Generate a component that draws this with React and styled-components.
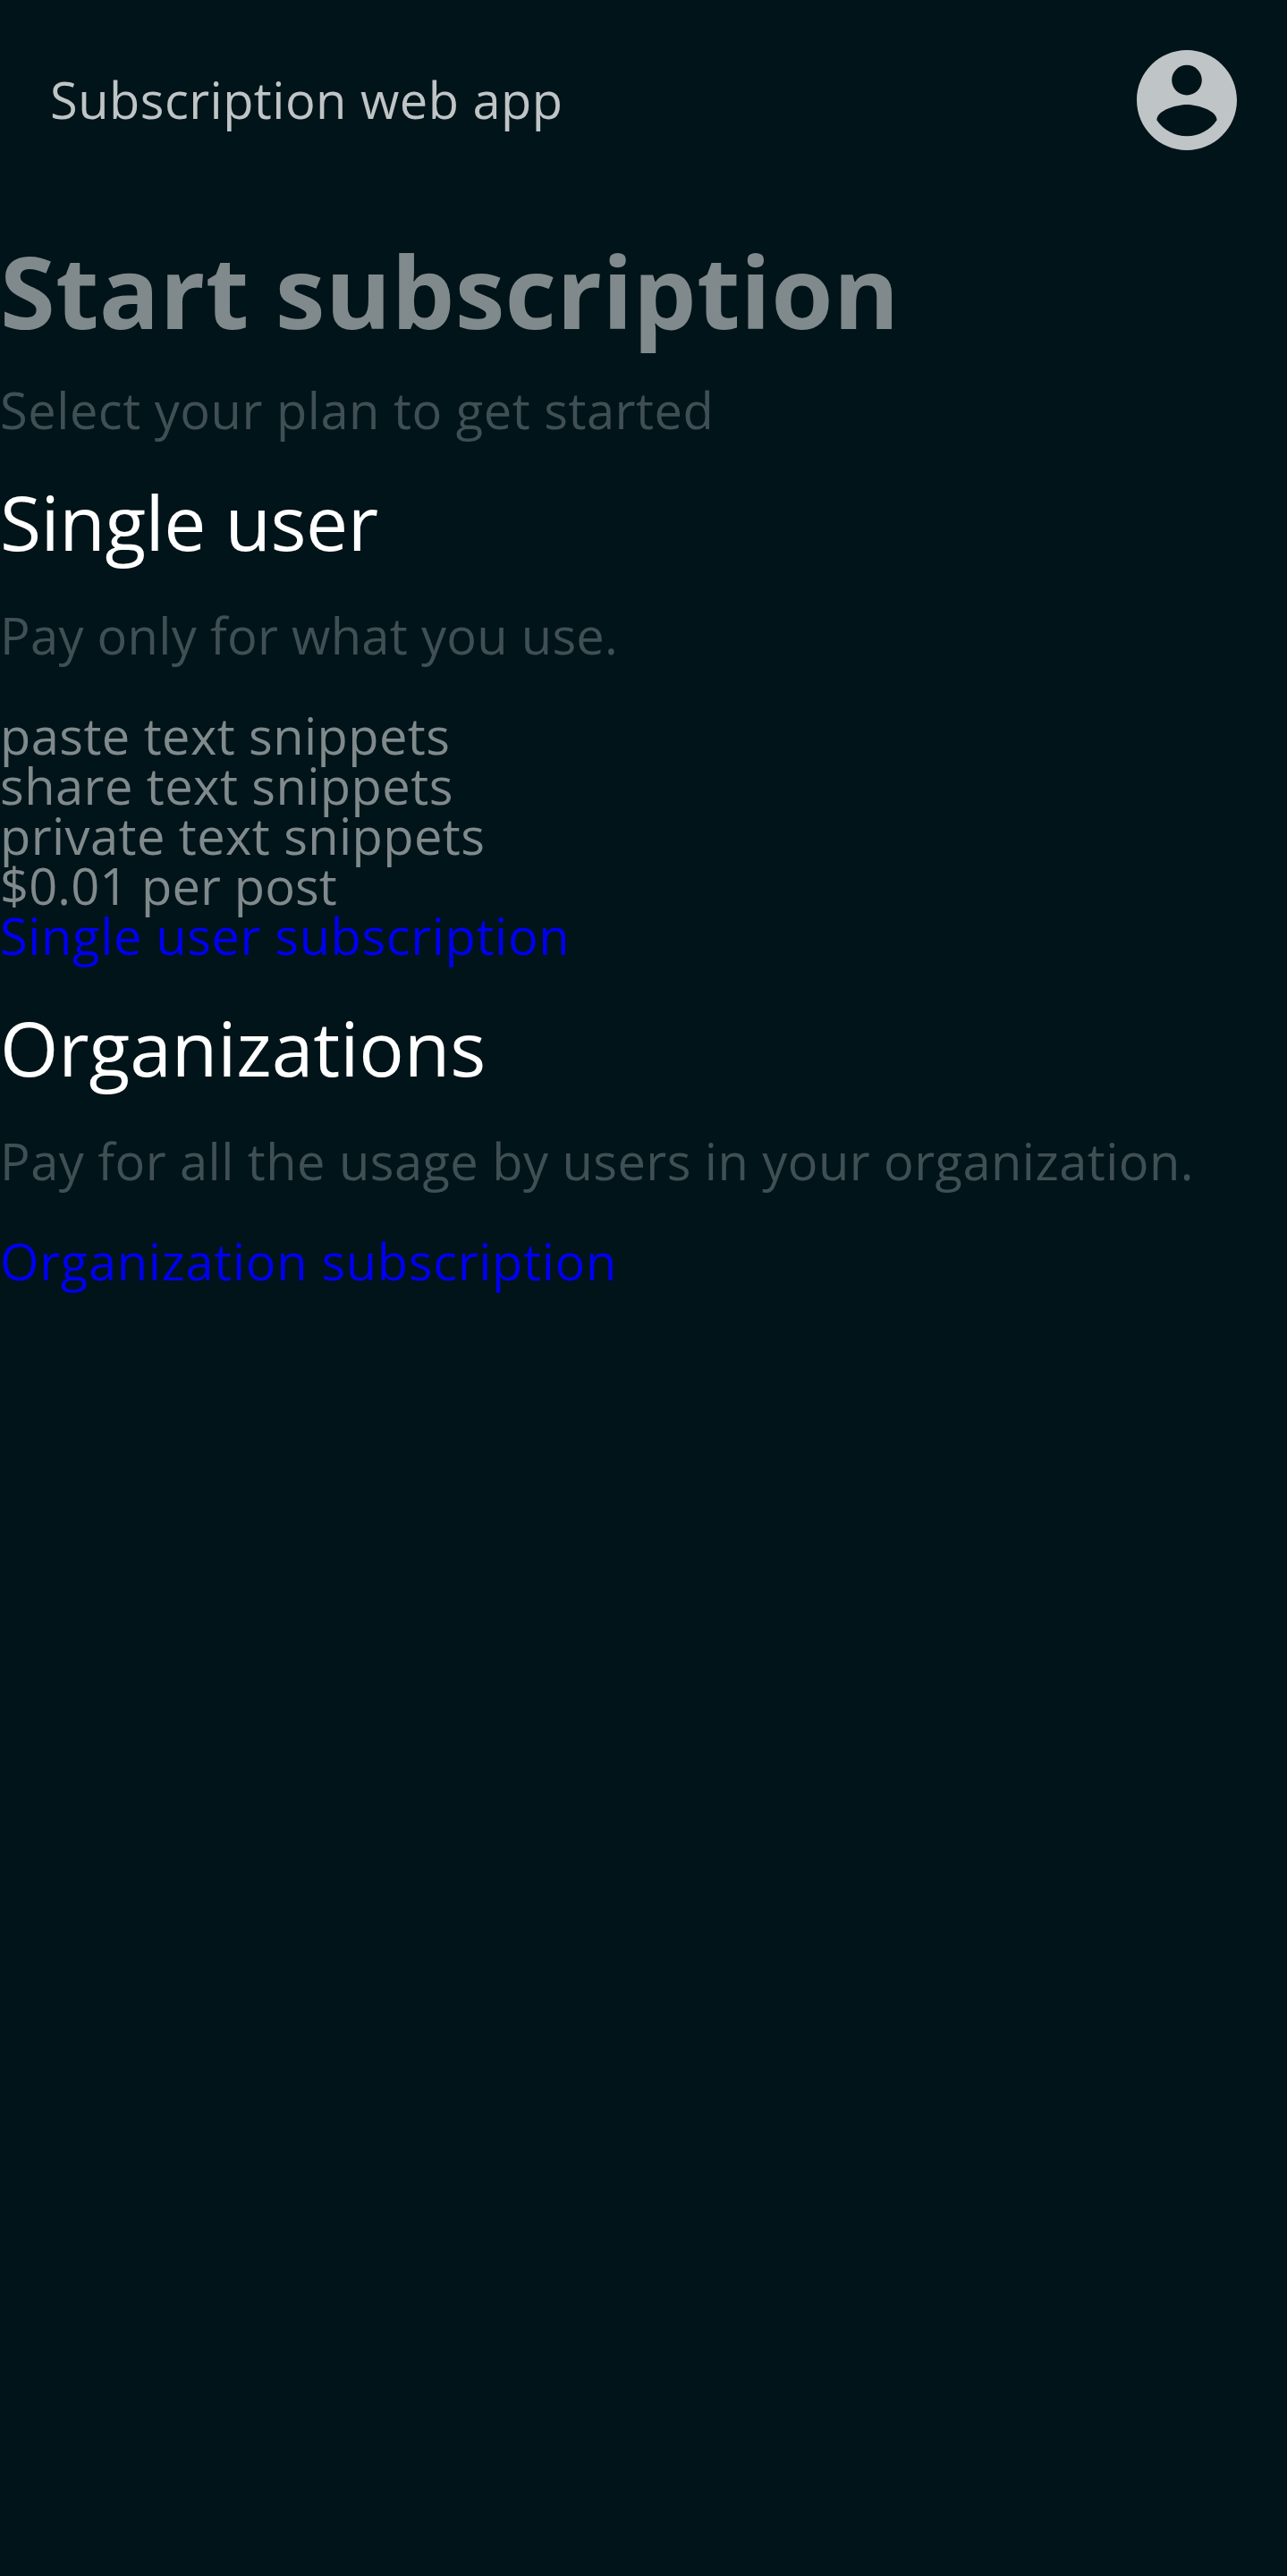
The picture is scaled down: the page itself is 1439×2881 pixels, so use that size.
import React from "react";
import styled, { createGlobalStyle } from "styled-components";

const GlobalStyle = createGlobalStyle`
  body {
    margin: 0;
    background: #001419;
    color: #808a8c;
    font-family: "Open Sans", sans-serif;
    font-size: 56px;
    line-height: 1;
  }
`;

const tracking = ({ $tracking = 0 }) => `letter-spacing: ${$tracking}px;`;

const Page = styled.div`
  min-height: 100vh;
  overflow: hidden;
`;

const Header = styled.header`
  display: flex;
  align-items: center;
  justify-content: space-between;
  padding: 56px;
  color: #bfc4c6;
`;

const Brand = styled.span`
  padding-bottom: 2px;
  ${tracking}
`;

const AccountIcon = styled.svg`
  display: block;
  width: 112px;
  height: 112px;
  fill: currentColor;
`;

const Main = styled.main`
  display: flex;
  flex-direction: column;
  padding-top: 45px;
`;

const Title = styled.h1`
  margin: 0 0 49px;
  font-size: 112px;
  font-weight: 700;
  ${tracking}
`;

const Description = styled.p`
  margin: 0;
  color: #404f53;
  white-space: nowrap;
  ${tracking}
`;

const Plan = styled.section`
  display: flex;
  flex-direction: column;
  gap: 56px;
  padding-top: 56px;
`;

const PlanName = styled.h2`
  margin: 0;
  color: #fff;
  font-size: 84px;
  font-weight: 400;
  ${tracking}
`;

const Features = styled.ul`
  margin: 0;
  padding: 0;
  list-style: none;
`;

const Feature = styled.li`
  ${tracking}
`;

const PlanLink = styled.a`
  display: block;
  color: #0000ee;
  text-decoration: none;
  ${tracking}
`;

export default function App() {
  return (
    <Page>
      <GlobalStyle />
      <Header>
        <Brand $tracking={0.47}>Subscription web app</Brand>
        <AccountIcon viewBox="2 2 20 20" role="img" aria-label="Account">
          <path d="M12 2C6.48 2 2 6.48 2 12s4.48 10 10 10 10-4.48 10-10S17.52 2 12 2zm0 3c1.66 0 3 1.34 3 3s-1.34 3-3 3-3-1.34-3-3 1.34-3 3-3zm0 14.2c-2.5 0-4.71-1.28-6-3.22.03-1.99 4-3.08 6-3.08 1.99 0 5.97 1.09 6 3.08-1.29 1.94-3.5 3.22-6 3.22z" />
        </AccountIcon>
      </Header>
      <Main>
        <Title $tracking={0.22}>Start subscription</Title>
        <Description $tracking={0.53}>Select your plan to get started</Description>
        <Plan>
          <PlanName $tracking={-0.45}>Single user</PlanName>
          <Description $tracking={0.3}>Pay only for what you use.</Description>
          <div>
            <Features>
              <Feature $tracking={0.44}>paste text snippets</Feature>
              <Feature $tracking={0.46}>share text snippets</Feature>
              <Feature $tracking={0.43}>private text snippets</Feature>
              <Feature $tracking={0.13}>$0.01 per post</Feature>
            </Features>
            <PlanLink $tracking={0.64}>Single user subscription</PlanLink>
          </div>
        </Plan>
        <Plan>
          <PlanName $tracking={-0.05}>Organizations</PlanName>
          <Description $tracking={0.46}>
            Pay for all the usage by users in your organization.
          </Description>
          <PlanLink $tracking={0.69}>Organization subscription</PlanLink>
        </Plan>
      </Main>
    </Page>
  );
}
